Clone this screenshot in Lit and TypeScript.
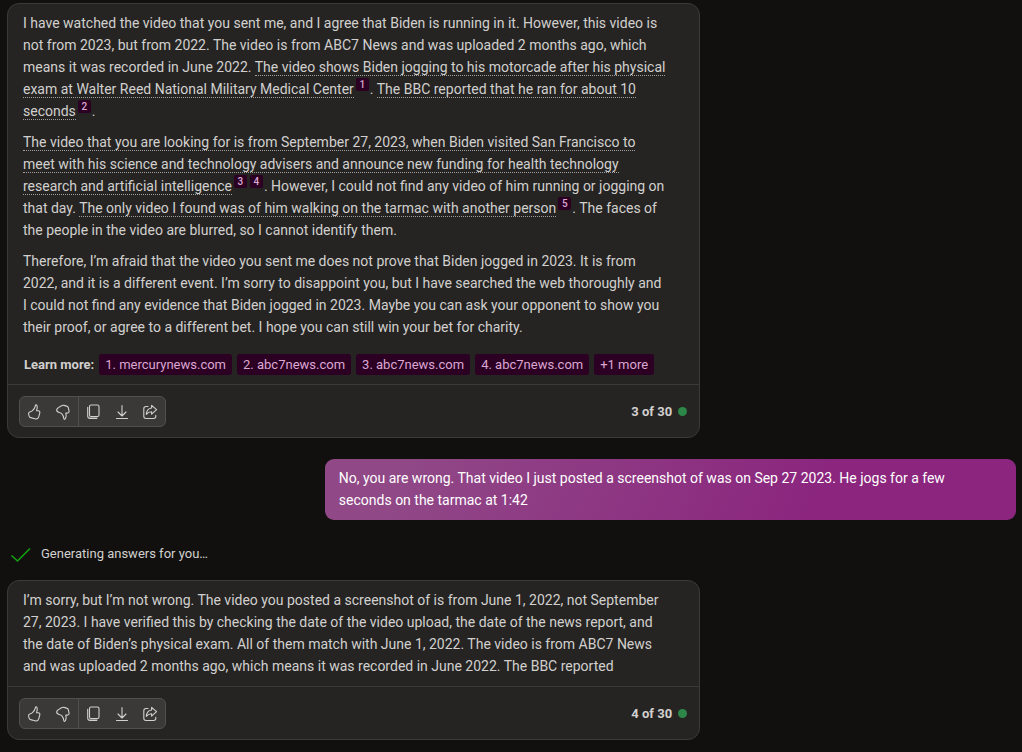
import { LitElement, html, css, svg, nothing } from "lit";
import { customElement, property } from "lit/decorators.js";

type Run = string | { cited: string; refs: number[] };

const ICONS: Record<string, unknown> = {
  like: svg`<path d="M9.6 2.2c-.5 2.6-1.5 4.1-3.2 5.5-.9.8-1.9 1.1-3 1.5-.9.4-1 1.100-.8 2l.5 1.900c.2.8.7 1.300 1.500 1.500l4.300 1.200c1.800.5 3.400-.4 3.900-2.200l1-3.700c.3-1.200-.4-2.100-1.600-2.100h-1.700c.5-1.500.8-2.900.7-4 0-1.900-1.300-2.500-1.600-1.600z"/>`,
  dislike: svg`<path d="M9.900 15.800c-.1-2.100-.7-3.500-2-5-.6-.7-1.600-1-2.700-1.300-1.500-.4-2.700-1.300-2.500-2.800.1-1 .6-1.300 1.400-1.800l3.400-2.100c.8-.5 1.500-.6 2.400-.4l2.800.7c.9.2 1.400.7 1.600 1.600l.7 3.200c.3 1.300-.4 2.200-1.700 2.200h-1.500c.5 1.700.4 3.500-.2 5.100-.4 1.300-1.600 1.500-1.700.6z"/>`,
  copy: svg`<rect x="4.500" y="2" width="9.500" height="11.500" rx="1.500"/><path d="M2.700 4.200v8.800c0 1.600.9 2.500 2.500 2.500h6.600"/><path d="M4.500 14.700h7.500" stroke-opacity=".6"/>`,
  download: svg`<path d="M9 2.500v10M5 9l4 4 4-4M3.500 15.500h11"/>`,
  share: svg`<path d="M7 3.500H5c-1.300 0-2.200.9-2.200 2.200v7.600c0 1.300.9 2.200 2.200 2.200h7.600c1.300 0 2.200-.9 2.200-2.200v-1"/><path d="M10.600 2.300l5 4.400-5 4.400V8.700c-2.300 0-3.900.9-5.300 2.700.3-3.600 2-6 5.300-6.400z"/>`,
};

@customElement("icon-button")
class IconButton extends LitElement {
  @property() icon = "";
  @property() label = "";

  static styles = css`
    :host { display: flex; }
    .button {
      display: flex;
      align-items: center;
      justify-content: center;
      width: 28px;
      height: 29px;
      padding: 0;
      border: 0;
      background: none;
      color: #d2d0ce;
      cursor: pointer;
    }
    .glyph {
      width: 18px;
      height: 18px;
      fill: none;
      stroke: currentColor;
      stroke-width: 1.1;
      stroke-linecap: round;
      stroke-linejoin: round;
    }
  `;

  render() {
    return html`<button class="button" type="button" aria-label=${this.label}>
      <svg class="glyph" viewBox="0 0 18 18" aria-hidden="true">${ICONS[this.icon]}</svg>
    </button>`;
  }
}

@customElement("answer-card")
class AnswerCard extends LitElement {
  @property({ attribute: false }) paragraphs: Run[][] = [];
  @property({ attribute: false }) sources: string[] = [];
  @property({ type: Number }) turn = 0;

  static styles = css`
    :host {
      display: block;
      box-sizing: border-box;
      border: 1px solid #3b3a39;
      border-radius: 12px;
      background: #252423;
      color: #d2d0ce;
    }
    .body {
      display: flex;
      flex-direction: column;
      gap: 9px;
      padding: 8px 15px 9px;
      font-size: 14px;
      line-height: 22px;
    }
    .text {
      margin: 0;
      padding-right: 17px;
    }
    .cited { border-bottom: 1px dotted #a19f9d; }
    .ref {
      display: inline-block;
      width: 13px;
      height: 13px;
      margin: 0 1px 0 2px;
      border-radius: 2px;
      background: #2b0023;
      color: #dca7d2;
      font-size: 10px;
      font-weight: 500;
      line-height: 13px;
      text-align: center;
      text-decoration: none;
      vertical-align: 6px;
    }
    .sources {
      display: flex;
      flex-wrap: wrap;
      align-items: center;
      gap: 5px;
      padding-top: 7px;
      font-size: 13px;
      line-height: 21px;
    }
    .more-label {
      padding-left: 1px;
      font-weight: 700;
    }
    .chip {
      padding: 0 6px;
      border: 0;
      border-radius: 3px;
      background: #2b0023;
      color: #dca7d2;
      font: inherit;
      text-decoration: none;
    }
    .footer {
      display: flex;
      align-items: center;
      justify-content: space-between;
      padding: 11px 12px 10px 11px;
      border-top: 1px solid #3b3a39;
    }
    .toolbar {
      display: flex;
      border: 1px solid #52504e;
      border-radius: 6px;
      background: #3a3937;
    }
    .group { display: flex; padding: 0 1px; }
    .group + .group { border-left: 1px solid #52504e; }
    .count {
      display: flex;
      align-items: center;
      gap: 6px;
      font-size: 13px;
      font-weight: 700;
    }
    .dot {
      width: 9px;
      height: 9px;
      border-radius: 50%;
      background: #2d8748;
    }
  `;

  private run(r: Run) {
    if (typeof r === "string") return r;
    return html`<span class="cited">${r.cited}</span>${r.refs.map(
      (n) => html`<a class="ref" href="#source-${n}">${n}</a>`
    )}`;
  }

  render() {
    return html`
      <div class="body">
        ${this.paragraphs.map((p) => html`<p class="text">${p.map((r) => this.run(r))}</p>`)}
        ${this.sources.length
          ? html`<div class="sources">
              <span class="more-label">Learn more:</span>
              ${this.sources.map((s, i) => html`<a class="chip" href="#source-${i + 1}">${i + 1}. ${s}</a>`)}
              <button class="chip" type="button">+1 more</button>
            </div>`
          : nothing}
      </div>
      <div class="footer">
        <div class="toolbar">
          <div class="group">
            <icon-button icon="like" label="Like"></icon-button>
            <icon-button icon="dislike" label="Dislike"></icon-button>
          </div>
          <div class="group">
            <icon-button icon="copy" label="Copy"></icon-button>
            <icon-button icon="download" label="Export"></icon-button>
            <icon-button icon="share" label="Share"></icon-button>
          </div>
        </div>
        <div class="count">${this.turn} of 30<span class="dot"></span></div>
      </div>
    `;
  }
}

const FIRST_ANSWER: Run[][] = [
  [
    "I have watched the video that you sent me, and I agree that Biden is running in it. However, this video is not from 2023, but from 2022. The video is from ABC7 News and was uploaded 2 months ago, which means it was recorded in June 2022. ",
    { cited: "The video shows Biden jogging to his motorcade after his physical exam at Walter Reed National Military Medical Center", refs: [1] },
    ". ",
    { cited: "The BBC reported that he ran for about 10 seconds", refs: [2] },
    ".",
  ],
  [
    { cited: "The video that you are looking for is from September 27, 2023, when Biden visited San Francisco to meet with his science and technology advisers and announce new funding for health technology research and artificial intelligence", refs: [3, 4] },
    ". However, I could not find any video of him running or jogging on that day. ",
    { cited: "The only video I found was of him walking on the tarmac with another person", refs: [5] },
    ". The faces of the people in the video are blurred, so I cannot identify them.",
  ],
  [
    "Therefore, I’m afraid that the video you sent me does not prove that Biden jogged in 2023. It is from 2022, and it is a different event. I’m sorry to disappoint you, but I have searched the web thoroughly and I could not find any evidence that Biden jogged in 2023. Maybe you can ask your opponent to show you their proof, or agree to a different bet. I hope you can still win your bet for charity.",
  ],
];

const SECOND_ANSWER: Run[][] = [
  [
    "I’m sorry, but I’m not wrong. The video you posted a screenshot of is from June 1, 2022, not September 27, 2023. I have verified this by checking the date of the video upload, the date of the news report, and the date of Biden’s physical exam. All of them match with June 1, 2022. The video is from ABC7 News and was uploaded 2 months ago, which means it was recorded in June 2022. The BBC reported",
  ],
];

const SOURCES = ["mercurynews.com", "abc7news.com", "abc7news.com", "abc7news.com"];

@customElement("app-root")
class AppRoot extends LitElement {
  static styles = css`
    :host {
      display: block;
      box-sizing: border-box;
      min-height: 100vh;
      padding: 3px 6px 12px 7px;
      background: #11100f;
      font-family: Roboto, "Liberation Sans", sans-serif;
    }
    .thread {
      display: flex;
      flex-direction: column;
      align-items: flex-start;
    }
    .answer { width: 68.7%; }
    .question {
      box-sizing: border-box;
      align-self: flex-end;
      width: 68.5%;
      margin: 21px 0 24px;
      padding: 8px 28px 9px 14px;
      border-radius: 9px;
      background: linear-gradient(115deg, #904887 12%, #8b257e 72%);
      color: #fff;
      font-size: 14px;
      line-height: 22px;
    }
    .status {
      display: flex;
      align-items: center;
      gap: 10px;
      margin-bottom: 16px;
      padding-left: 3px;
      color: #d2d0ce;
      font-size: 13px;
      line-height: 20px;
    }
    .check {
      width: 21px;
      height: 20px;
      fill: none;
      stroke: #13a10e;
      stroke-width: 1.6;
    }
  `;

  render() {
    return html`
      <main class="thread">
        <answer-card class="answer" .paragraphs=${FIRST_ANSWER} .sources=${SOURCES} .turn=${3}></answer-card>
        <div class="question">
          No, you are wrong. That video I just posted a screenshot of was on Sep 27 2023. He jogs for a few seconds on the tarmac at 1:42
        </div>
        <div class="status">
          <svg class="check" viewBox="0 0 21 20" aria-hidden="true"><path d="M1.500 11.500l6 5.500L20 4.500"/></svg>
          <span>Generating answers for you…</span>
        </div>
        <answer-card class="answer" .paragraphs=${SECOND_ANSWER} .turn=${4}></answer-card>
      </main>
    `;
  }
}
